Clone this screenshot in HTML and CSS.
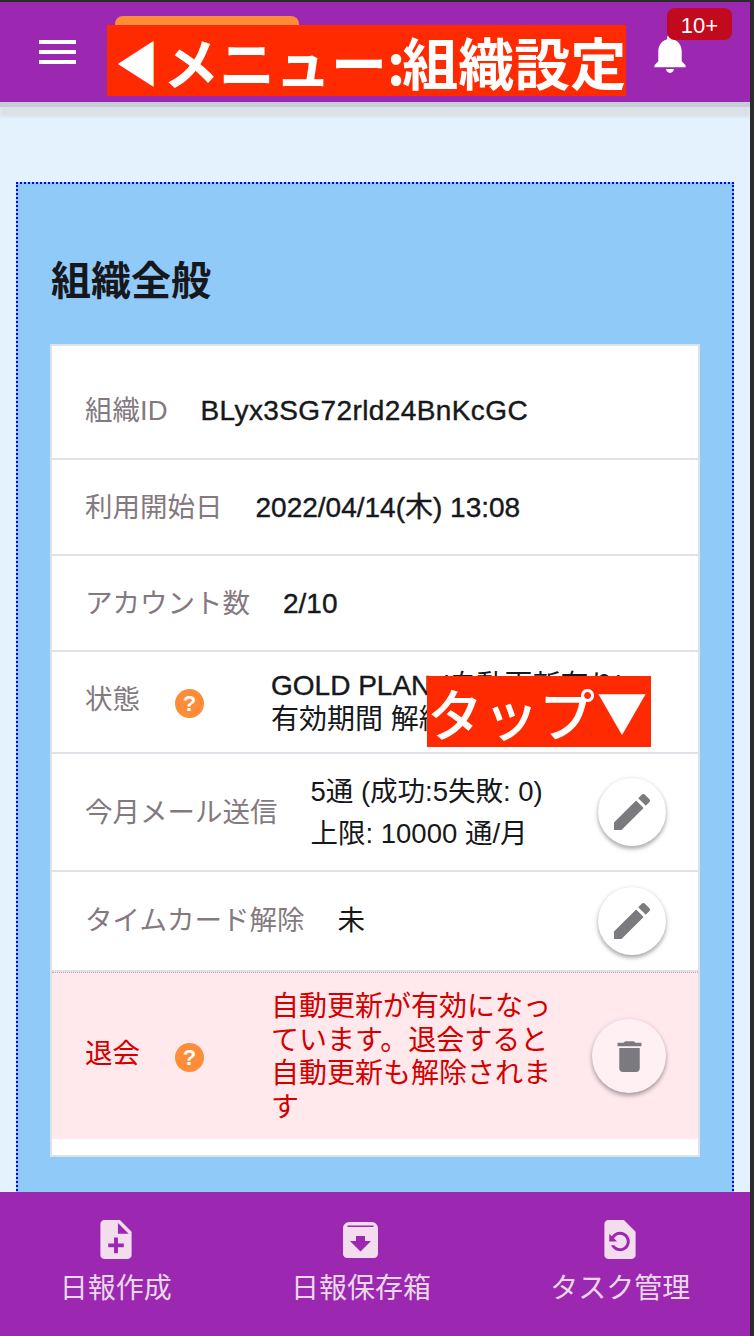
FILE: index.html
```html
<!DOCTYPE html>
<html lang="ja">
<head>
    <meta charset="UTF-8">
    <meta name="viewport" content="width=device-width, initial-scale=1.0">
    <title>組織設定</title>
    <link rel="stylesheet" href="styles.css">
</head>
<body>
    <div class="app">
        <header class="topbar">
            <div class="menu-btn"><span></span><span></span><span></span></div>
            <div class="top-tab"></div>
            <svg class="bell" viewBox="4 2.5 16 19.5"><path d="M12 22c1.1 0 2-.9 2-2h-4c0 1.1.89 2 2 2zm6-6v-5c0-3.07-1.64-5.64-4.5-6.32V4c0-.83-.67-1.5-1.5-1.5s-1.5.67-1.5 1.5v.68C7.63 5.36 6 7.92 6 11v5l-2 2v1h16v-1l-2-2z"/></svg>
            <div class="badge">10+</div>
        </header>

        <main class="content">
            <section class="panel">
                <h1>組織全般</h1>
                <div class="card">
                    <div class="row row-first">
                        <span class="label">組織ID</span>
                        <span class="value value-id">BLyx3SG72rld24BnKcGC</span>
                    </div>
                    <div class="row">
                        <span class="label">利用開始日</span>
                        <span class="value">2022/04/14(木) 13:08</span>
                    </div>
                    <div class="row">
                        <span class="label">アカウント数</span>
                        <span class="value">2/10</span>
                    </div>
                    <div class="row row-plan">
                        <span class="label label-help">状態</span>
                        <span class="help">?</span>
                        <span class="value-plan"><span class="value">GOLD PLAN</span> (自動更新有り)<br>有効期間 解約まで</span>
                    </div>
                    <div class="row row-mail">
                        <span class="label">今月メール送信</span>
                        <span class="value-light">5通 (成功:5失敗: 0)<br>上限: 10000 通/月</span>
                        <button class="round-btn">
                            <svg viewBox="0 0 24 24"><path d="M3 17.25V21h3.75L17.81 9.94l-3.75-3.75L3 17.25zM20.71 7.04c.39-.39.39-1.02 0-1.41l-2.34-2.34c-.39-.39-1.02-.39-1.41 0l-1.83 1.83 3.75 3.75 1.83-1.83z"/></svg>
                        </button>
                    </div>
                    <div class="row row-card">
                        <span class="label">タイムカード解除</span>
                        <span class="value-light">未</span>
                        <button class="round-btn">
                            <svg viewBox="0 0 24 24"><path d="M3 17.25V21h3.75L17.81 9.94l-3.75-3.75L3 17.25zM20.71 7.04c.39-.39.39-1.02 0-1.41l-2.34-2.34c-.39-.39-1.02-.39-1.41 0l-1.83 1.83 3.75 3.75 1.83-1.83z"/></svg>
                        </button>
                    </div>
                    <div class="row row-danger">
                        <span class="label label-help">退会</span>
                        <span class="help">?</span>
                        <span class="value-danger">自動更新が有効になっています。退会すると自動更新も解除されます</span>
                        <button class="round-btn round-btn-large">
                            <svg viewBox="0 0 24 24"><path d="M6 19c0 1.1.9 2 2 2h8c1.1 0 2-.9 2-2V7H6v12zM19 4h-3.5l-1-1h-5l-1 1H5v2h14V4z"/></svg>
                        </button>
                    </div>
                </div>
            </section>
        </main>

        <footer class="bottombar">
            <div class="nav-item">
                <svg viewBox="4 2 16 20"><path d="M14 2H6c-1.1 0-1.99.9-1.99 2L4 20c0 1.1.89 2 1.99 2H18c1.1 0 2-.9 2-2V8l-6-6zm2 14h-3v3h-2v-3H8v-2h3v-3h2v3h3v2zm-3-7V3.5L18.5 9H13z"/></svg>
                <span>日報作成</span>
            </div>
            <div class="nav-item">
                <svg class="nav-box" viewBox="0 0 35 36"><path d="M6 0h23c3 0 6 3 6 6v26c0 2.200-1.800 4-4 4H4c-2.200 0-4-1.800-4-4V6c0-3 3-6 6-6zM4.500 3.500V5h26V3.500zM13 14v5H7l10.500 10.500L28 19h-6v-5z" fill-rule="evenodd"/></svg>
                <span>日報保存箱</span>
            </div>
            <div class="nav-item">
                <svg viewBox="4 2 16 20"><path d="M14 2H6c-1.1 0-1.99.9-1.99 2L4 20c0 1.1.89 2 1.99 2H18c1.1 0 2-.9 2-2V8l-6-6zm-2 16c-2.05 0-3.81-1.24-4.58-3h1.71c.63.9 1.68 1.5 2.87 1.5 1.93 0 3.5-1.57 3.5-3.5S13.93 9.5 12 9.5c-1.35 0-2.52.78-3.1 1.9l1.6 1.6h-4V9l1.3 1.3C8.69 8.92 10.23 8 12 8c2.76 0 5 2.24 5 5s-2.24 5-5 5z"/></svg>
                <span>タスク管理</span>
            </div>
        </footer>

        <div class="callout callout-menu"><span class="arrow-left">◀</span>メニュー<span class="colon">:</span>組織設定</div>
        <div class="callout callout-tap">タップ<span class="arrow-down">▼</span></div>
    </div>
</body>
</html>
```

FILE: styles.css
```css
* {
    box-sizing: border-box;
}
html, body {
    margin: 0;
    height: 100%;
}
body {
    background: #2b2b2b;
    padding-top: 2px;
    font-family: "Liberation Sans", "Noto Sans CJK JP", sans-serif;
    color: #212529;
    overflow: hidden;
}
.app {
    position: relative;
    width: 750px;
    height: 1334px;
    display: flex;
    flex-direction: column;
    background: #e3f2fd;
    overflow: hidden;
}

/* top bar */
.topbar {
    position: relative;
    z-index: 2;
    flex: none;
    height: 100px;
    background: #9c27b0;
    box-shadow: 0 5px 0 #c5cdd8, 0 15px 3px #dbe1e6;
}
.menu-btn {
    position: absolute;
    left: 39px;
    top: 38px;
    width: 37px;
    display: flex;
    flex-direction: column;
    gap: 6px;
}
.menu-btn span {
    height: 4px;
    background: #ffffff;
}
.top-tab {
    position: absolute;
    left: 115px;
    top: 14px;
    width: 184px;
    height: 30px;
    background: #ff8c38;
    border-radius: 8px 8px 0 0;
}
.bell {
    position: absolute;
    left: 653px;
    top: 33px;
    width: 34px;
    height: 38px;
    fill: #ffffff;
}
.badge {
    position: absolute;
    left: 667px;
    top: 6px;
    width: 65px;
    height: 32px;
    background: #c20a1e;
    border-radius: 8px;
    color: #ffffff;
    font-size: 22px;
    line-height: 36px;
    text-align: center;
}

/* main */
.content {
    flex: 1;
    min-height: 0;
    overflow: hidden;
    padding: 80px 16px 0;
}
.panel {
    height: 1100px;
    background: #90caf9;
    border: 2px dotted #0000ff;
    padding: 0 32px;
}
.panel h1 {
    margin: 71px 0 37px 1px;
    font-size: 40px;
    line-height: 52px;
    font-weight: 700;
    color: #16181b;
}
.card {
    height: 813px;
    background: #ffffff;
    border: 2px solid #dee2e6;
}
.row {
    display: flex;
    align-items: center;
    gap: 33px;
    height: 96px;
    padding: 2px 32px 0 33px;
    border-bottom: 2px solid #dee2e6;
}
.row-first {
    height: 114px;
    padding-top: 18px;
}
.row-plan {
    height: 102px;
    gap: 0;
}
.row-mail {
    height: 118px;
}
.row-card {
    height: 100px;
    padding-top: 0;
    padding-bottom: 1px;
}
.row-danger {
    height: 167px;
    gap: 0;
    background: #ffe9ec;
    border-top: 1px dotted #b9a3a8;
    border-bottom: none;
}
.label {
    flex: none;
    font-size: 27.500px;
    line-height: 34px;
    color: #84797f;
}
.label-help {
    width: 90px;
    margin-bottom: 6px;
}
.value {
    font-size: 28px;
    line-height: 34px;
    color: #16181b;
    -webkit-text-stroke: 0.4px #16181b;
}
.value-id {
    letter-spacing: 0.4px;
}
.value-light {
    font-size: 27.500px;
    line-height: 42px;
    color: #16181b;
}
.value-plan {
    margin-left: 67px;
    font-size: 28px;
    line-height: 34px;
    color: #16181b;
    white-space: nowrap;
}
.value-danger {
    width: 285px;
    margin-left: 67px;
    font-size: 28px;
    line-height: 33.500px;
    color: #d40000;
}
.row-danger .label {
    color: #d40000;
}
.help {
    flex: none;
    width: 29px;
    height: 29px;
    border-radius: 50%;
    background: #ff8c38;
    color: #ffffff;
    font-size: 22px;
    font-weight: 700;
    line-height: 29px;
    text-align: center;
}
.round-btn {
    flex: none;
    margin-left: auto;
    margin-bottom: 2px;
    width: 68px;
    height: 68px;
    padding: 0;
    border: none;
    border-radius: 50%;
    background: #ffffff;
    box-shadow: 0 3px 4px rgba(0, 0, 0, 0.3), 0 0 4px rgba(150, 60, 190, 0.15);
    display: flex;
    align-items: center;
    justify-content: center;
}
.row-card .round-btn {
    margin-bottom: 0;
}
.round-btn svg {
    width: 48px;
    height: 48px;
    fill: #7b7b7f;
}
.round-btn-large {
    width: 74px;
    height: 74px;
    background: #fff1f3;
}
.round-btn-large svg {
    width: 41px;
    height: 41px;
}

/* bottom nav */
.bottombar {
    position: relative;
    z-index: 2;
    flex: none;
    height: 144px;
    background: #9c27b0;
    display: flex;
    justify-content: space-around;
    padding-top: 28px;
}
.nav-item {
    display: flex;
    flex-direction: column;
    align-items: center;
    gap: 10px;
    color: #e8d8e8;
    font-size: 28px;
    line-height: 40px;
}
.nav-item svg {
    width: 32px;
    height: 39px;
    fill: #f3dcee;
}
.nav-item .nav-box {
    width: 35px;
    height: 36px;
    margin: 2px 0 1px;
}

/* red notes laid over the screen */
.callout {
    position: absolute;
    z-index: 3;
    height: 71px;
    background: #ff2a00;
    color: #ffffff;
    font-family: "Noto Sans CJK JP", sans-serif;
    font-size: 56px;
    font-weight: 700;
    white-space: nowrap;
    display: flex;
    align-items: center;
}
.callout-menu {
    left: 107px;
    top: 23px;
}
.callout-tap {
    left: 427px;
    top: 674px;
    padding-right: 4px;
    font-weight: 500;
}
.arrow-left {
    display: inline-block;
    transform: translateX(2px) scale(0.78, 0.87);
}
.colon {
    letter-spacing: -3px;
}
.arrow-down {
    margin: -4px 0 0 2px;
    font-size: 50px;
}
```
